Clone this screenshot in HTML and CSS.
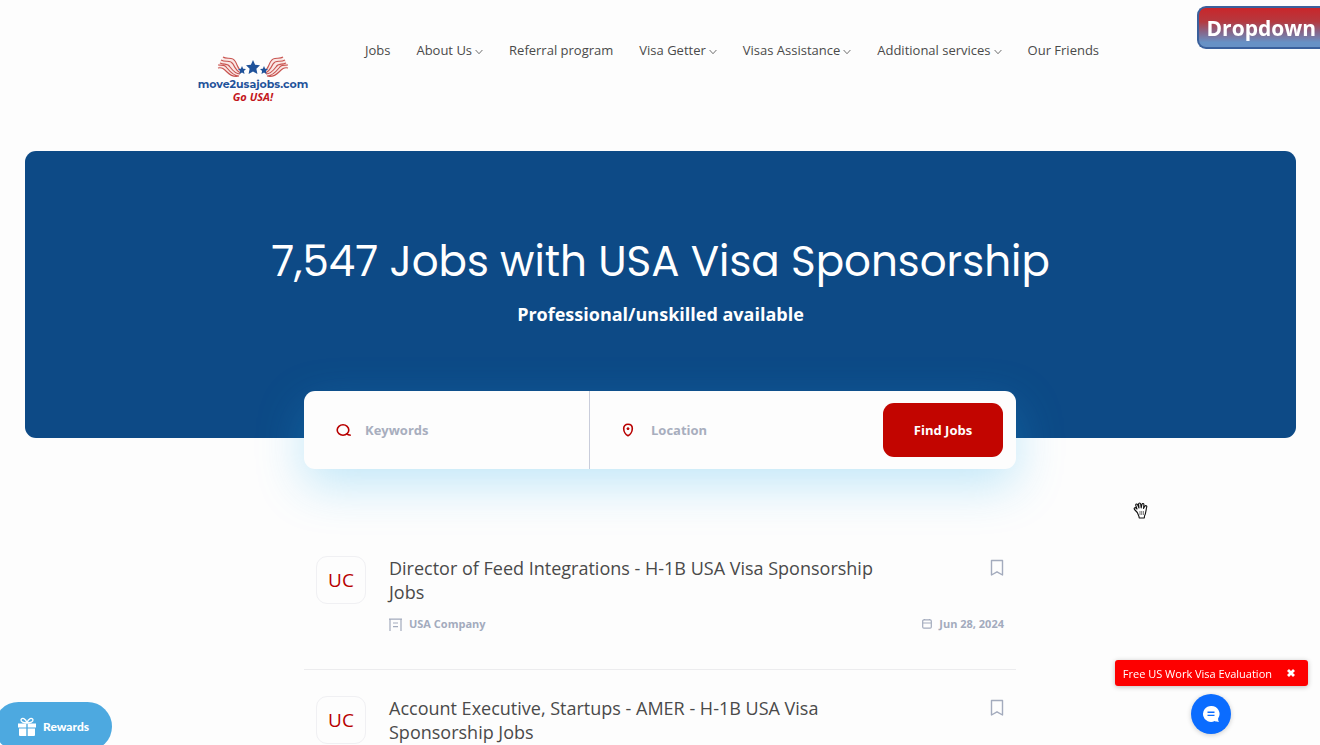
FILE: index.html
```html
<!DOCTYPE html>
<html lang="en">
<head>
    <meta charset="UTF-8">
    <meta name="viewport" content="width=device-width, initial-scale=1.0">
    <title>move2usajobs.com</title>
    <link rel="stylesheet" href="styles.css">
</head>
<body>
    <!-- Shared icons -->
    <svg class="sprite" width="0" height="0" aria-hidden="true">
        <symbol id="chevron" viewBox="0 0 8 6"><path d="M.6 1L4 4.700 7.400 1" fill="none" stroke="currentColor" stroke-width="0.8"/></symbol>
        <symbol id="bookmark" viewBox="0 0 14 18"><path d="M1.500 1.500h11v14.500L7 12.800 1.500 16z" fill="none" stroke="currentColor" stroke-width="1.400" stroke-linejoin="round"/></symbol>
        <symbol id="star" viewBox="0 0 20 20"><path d="M10 0l3 6.700 7 .8-5.200 5 1.500 7.500-6.300-3.700L3.700 20l1.500-7.500L0 7.500l7-.8z" fill="currentColor"/></symbol>
    </svg>

    <header class="header">
        <a href="#" class="logo">
            <svg class="logo-art" width="72" height="22" viewBox="0 0 72 22" aria-hidden="true">
                <g id="flag">
                    <path d="M6 1c4 3 9-1 12 4 3 4 2 8 7 10l-3 5c-4 1-9-1-12-4C7 13 5 11 1 12c2-2 1-3 0-4 2 0 2-2 2-3 2 0 3-2 3-4z" fill="#fae6e4"/>
                    <path d="M6 1c4 3 9-1 12 4 3 4 2 8 7 10M4 4c5 3 9-1 12 4 2 4 4 8 8 9M3 7c5 2 8 0 10 4 3 4 6 7 10 7M1 9c5 0 7 0 9 3 4 5 8 8 12 8M1 12c4-1 6 1 9 4 3 3 8 5 12 4" fill="none" stroke="#c85450" stroke-width="1.200"/>
                </g>
                <use href="#flag" transform="translate(72 0) scale(-1 1)"/>
                <use href="#star" x="29" y="4" width="14" height="14"/>
                <use href="#star" x="21" y="10" width="8" height="8"/>
                <use href="#star" x="43" y="10" width="8" height="8"/>
            </svg>
            <span class="logo-name">move2usajobs.com</span>
            <span class="logo-tag">Go USA!</span>
        </a>

        <nav class="nav">
            <a href="#">Jobs</a>
            <a href="#">About Us <svg width="8" height="6"><use href="#chevron"/></svg></a>
            <a href="#">Referral program</a>
            <a href="#">Visa Getter <svg width="8" height="6"><use href="#chevron"/></svg></a>
            <a href="#">Visas Assistance <svg width="8" height="6"><use href="#chevron"/></svg></a>
            <a href="#">Additional services <svg width="8" height="6"><use href="#chevron"/></svg></a>
            <a href="#">Our Friends</a>
        </nav>
    </header>

    <button type="button" class="dropdown-btn">Dropdown</button>

    <main>
        <section class="hero">
            <h1>7,547 Jobs with USA Visa Sponsorship</h1>
            <p>Professional/unskilled available</p>
        </section>

        <form class="search">
            <label class="field" for="keywords">
                <svg width="16" height="14" viewBox="0 0 16 14" role="img" aria-label="Keywords"><ellipse cx="7" cy="7" rx="5.800" ry="5.200"/><path d="M10.500 10.500c1 1.200 2.200 1.700 4.300 1.700"/></svg>
                <input type="text" id="keywords" name="keywords" placeholder="Keywords">
            </label>
            <label class="field" for="location">
                <svg width="16" height="14" viewBox="2 0 16 14" role="img" aria-label="Location"><path d="M8 1.200c2.700 0 4.300 1.900 4.300 4.200 0 3-2 6.300-4.300 7.300-2.300-1-4.300-4.300-4.300-7.300 0-2.300 1.600-4.200 4.300-4.200z"/><circle cx="8" cy="5.700" r="1" fill="currentColor" stroke-width="1"/></svg>
                <input type="text" id="location" name="location" placeholder="Location">
            </label>
            <button type="submit">Find Jobs</button>
        </form>

        <section class="jobs">
            <article class="job">
                <div class="job-logo">UC</div>
                <div class="job-body">
                    <div class="job-top">
                        <h2><a href="#">Director of Feed Integrations - H-1B USA Visa Sponsorship Jobs</a></h2>
                        <button type="button" class="save" aria-label="Save job"><svg width="14" height="18"><use href="#bookmark"/></svg></button>
                    </div>
                    <div class="job-meta">
                        <span class="company">
                            <svg width="13" height="13" viewBox="0 0 13 13"><path d="M1 13V1.200h11V13M0 1.200h13M4 5h5M4 8.700h5"/></svg>
                            USA Company
                        </span>
                        <span class="date">
                            <svg width="10" height="10" viewBox="0 0 10 10"><rect x=".7" y=".9" width="8.600" height="8.300" rx="1.200"/><path d="M.7 4h8.600M2.500 0v1M7.500 0v1"/></svg>
                            Jun 28, 2024
                        </span>
                    </div>
                </div>
            </article>
            <article class="job">
                <div class="job-logo">UC</div>
                <div class="job-body">
                    <div class="job-top">
                        <h2><a href="#">Account Executive, Startups - AMER - H-1B USA Visa Sponsorship Jobs</a></h2>
                        <button type="button" class="save" aria-label="Save job"><svg width="14" height="18"><use href="#bookmark"/></svg></button>
                    </div>
                </div>
            </article>
        </section>
    </main>

    <!-- Floating widgets -->
    <button type="button" class="rewards">
        <svg width="20" height="20" viewBox="0 0 20 20" fill="#fff"><path d="M1 6.500h8.300v4H1zM10.700 6.500H19v4h-8.300zM2 11.500h7.300V19H3a1 1 0 0 1-1-1zM10.700 11.500H18V18a1 1 0 0 1-1 1h-6.300z"/><path d="M10 6C7 6 3.500 4.800 4 2.700 4.800.3 8.800 1.300 10 6c1.200-4.700 5.200-5.700 6-3.300.5 2.100-3 3.300-6 3.300z" fill="none" stroke="#fff" stroke-width="1.300"/></svg>
        Rewards
    </button>

    <div class="chat">
        <div class="chat-note">
            <span>Free US Work Visa Evaluation</span>
            <button type="button" aria-label="Close"><svg width="8" height="8" viewBox="0 0 8 8"><path d="M1 1l6 6M7 1L1 7" stroke="#fff" stroke-width="2.800"/></svg></button>
        </div>
        <button type="button" class="chat-btn" aria-label="Open chat">
            <svg width="18" height="18" viewBox="0 0 18 18"><path d="M9 1a8 8 0 1 0 3.700 15.100c1.300.7 2.500.9 4.300.9-.7-1-.9-2-.9-3.500A8 8 0 0 0 9 1z" fill="#fff"/><path d="M5.500 7.200h7M5.500 10.400h7" stroke="#0b6cff" stroke-width="1.400"/></svg>
        </button>
    </div>

    <svg class="hand" width="16" height="17" viewBox="0 0 16 17" aria-hidden="true"><path d="M4.300 10.500L1.500 7.500C.6 6.300 2 5.200 3 6l1 1-1.200-3.500c-.4-1.500 1.200-2 1.800-.7L6 6l-.4-3.800c0-1.600 1.900-1.600 2.100 0L8.200 6l.7-3.500c.4-1.500 2.200-1.100 2 .4L10.500 6.500l1.300-2.300c.8-1.200 2.400-.5 1.900.9-.7 2.200-.7 6.400-2.200 8.900l-.2 2H6.200l-.2-1.500z" fill="#fff" stroke="#111" stroke-width="1.100" stroke-linejoin="round"/><path d="M7 9v4M8.700 9v4M10.400 9v4" stroke="#555" stroke-width=".8"/></svg>
</body>
</html>
```
FILE: styles.css
```css
* {
    box-sizing: border-box;
}

body {
    margin: 0;
    height: 100vh;
    overflow: hidden;
    background-color: #fdfdfd;
    color: #4a4a4a;
    font-family: "Open Sans", "Noto Sans", sans-serif;
    font-size: 13px;
}

a {
    color: inherit;
    text-decoration: none;
}

button {
    border: none;
    padding: 0;
    font-family: inherit;
    cursor: pointer;
}

svg {
    display: block;
    flex-shrink: 0;
}

.sprite {
    position: absolute;
}

/* Header */
.header {
    display: flex;
    justify-content: center;
    align-items: flex-start;
    gap: 56px;
    height: 151px;
    padding: 40px 24px 0 0;
}

.logo {
    display: flex;
    flex-direction: column;
    align-items: center;
    width: 112px;
    margin-top: 16px;
    color: #1f529a;
}

.logo-name {
    font-family: Montserrat, Inter, sans-serif;
    font-size: 11px;
    font-weight: 700;
    line-height: 12px;
}

.logo-tag {
    color: #c3161c;
    font-size: 11px;
    font-style: italic;
    font-weight: 700;
    line-height: 14px;
}

.nav {
    display: flex;
    gap: 26px;
    font-size: 13px;
    line-height: 20px;
    white-space: nowrap;
}

.nav a {
    display: flex;
    align-items: center;
    gap: 3px;
}

.nav svg {
    margin-top: 3px;
}

.dropdown-btn {
    position: fixed;
    top: 6px;
    right: 0;
    height: 43px;
    padding: 0 4px 0 8px;
    border: 2px solid #3a609c;
    border-right: none;
    border-radius: 9px 0 0 9px;
    background: linear-gradient(#c9262b, #b5393f 35%, #86668a 62%, #6791c5 88%);
    color: #fff;
    font-size: 21px;
    font-weight: 700;
}

/* Hero */
.hero {
    display: flex;
    flex-direction: column;
    align-items: center;
    height: 287px;
    margin: 0 24px 0 25px;
    padding-top: 80px;
    border-radius: 11px;
    background-color: #0d4a86;
    color: #fff;
    text-align: center;
}

.hero h1 {
    margin: 0;
    font-family: Poppins, Inter, sans-serif;
    font-size: 42px;
    font-weight: 400;
    line-height: 62px;
}

.hero p {
    margin: 9px 0 0;
    font-size: 18px;
    font-weight: 700;
    line-height: 24px;
}

.search {
    position: relative;
    display: flex;
    align-items: center;
    max-width: 712px;
    height: 78px;
    margin: -47px auto 0;
    padding-right: 13px;
    border-radius: 11px;
    background-color: #fdfdfd;
    box-shadow: 0 16px 48px rgba(35, 175, 235, 0.27);
}

.field {
    display: flex;
    flex: 1;
    align-items: center;
    gap: 13px;
    height: 100%;
    padding-left: 32px;
    color: #b80000;
}

.field + .field {
    border-left: 1px solid #c9cddb;
}

.field svg {
    fill: none;
    stroke: currentColor;
    stroke-width: 1.6;
}

.field input {
    flex: 1;
    min-width: 0;
    padding: 0;
    border: none;
    outline: none;
    background: none;
    color: #4a4a4a;
    font-family: inherit;
    font-size: 13px;
    font-weight: 700;
}

.field input::placeholder {
    color: #a8aebe;
    opacity: 1;
}

.search button {
    width: 120px;
    height: 54px;
    margin-left: 8px;
    border-radius: 11px;
    background-color: #c20500;
    color: #fff;
    font-size: 13px;
    font-weight: 700;
}

/* Job list */
.jobs {
    max-width: 712px;
    margin: 61px auto 0;
}

.job {
    display: flex;
    gap: 23px;
    height: 140px;
    padding: 26px 12px 0;
    border-bottom: 1px solid #ececee;
}

.job-logo {
    display: flex;
    justify-content: center;
    align-items: center;
    width: 50px;
    height: 48px;
    border: 1px solid #f0f0f3;
    border-radius: 11px;
    color: #b80000;
    font-size: 19px;
}

.job-body {
    flex: 1;
}

.job-top {
    display: flex;
    justify-content: space-between;
    align-items: flex-start;
}

.job h2 {
    max-width: 500px;
    margin: 0;
    font-size: 18px;
    font-weight: 400;
    line-height: 24px;
}

.save {
    margin-top: 3px;
    background: none;
    color: #a3abbd;
}

.job-meta {
    display: flex;
    justify-content: space-between;
    margin-top: 12px;
    color: #a3abbd;
    font-size: 11px;
    font-weight: 700;
    line-height: 16px;
}

.job-meta span {
    display: flex;
    align-items: center;
    gap: 7px;
}

.job-meta svg {
    fill: none;
    stroke: currentColor;
    stroke-width: 1.2;
}

/* Floating widgets */
.rewards {
    position: fixed;
    bottom: -6px;
    left: -6px;
    display: flex;
    align-items: center;
    gap: 6px;
    height: 49px;
    padding: 0 23px;
    border-radius: 25px;
    background-color: #4da9e0;
    color: #fff;
    font-family: Lato, sans-serif;
    font-size: 12px;
    font-weight: 900;
}

.chat {
    position: fixed;
    right: 12px;
    bottom: 11px;
    display: flex;
    flex-direction: column;
    align-items: center;
    gap: 8px;
}

.chat-note {
    display: flex;
    align-items: center;
    gap: 15px;
    height: 26px;
    padding: 0 13px 0 8px;
    border-radius: 3px;
    background-color: #fd0000;
    box-shadow: 0 1px 5px rgba(0, 0, 0, 0.25);
    color: #fff;
    font-size: 11px;
}

.chat-note button {
    background: none;
}

.chat-btn {
    display: flex;
    justify-content: center;
    align-items: center;
    width: 40px;
    height: 40px;
    border-radius: 50%;
    background-color: #0b6cff;
    box-shadow: 0 1px 5px rgba(0, 0, 0, 0.2);
}

.hand {
    position: absolute;
    top: 502px;
    left: 1133px;
}
```
